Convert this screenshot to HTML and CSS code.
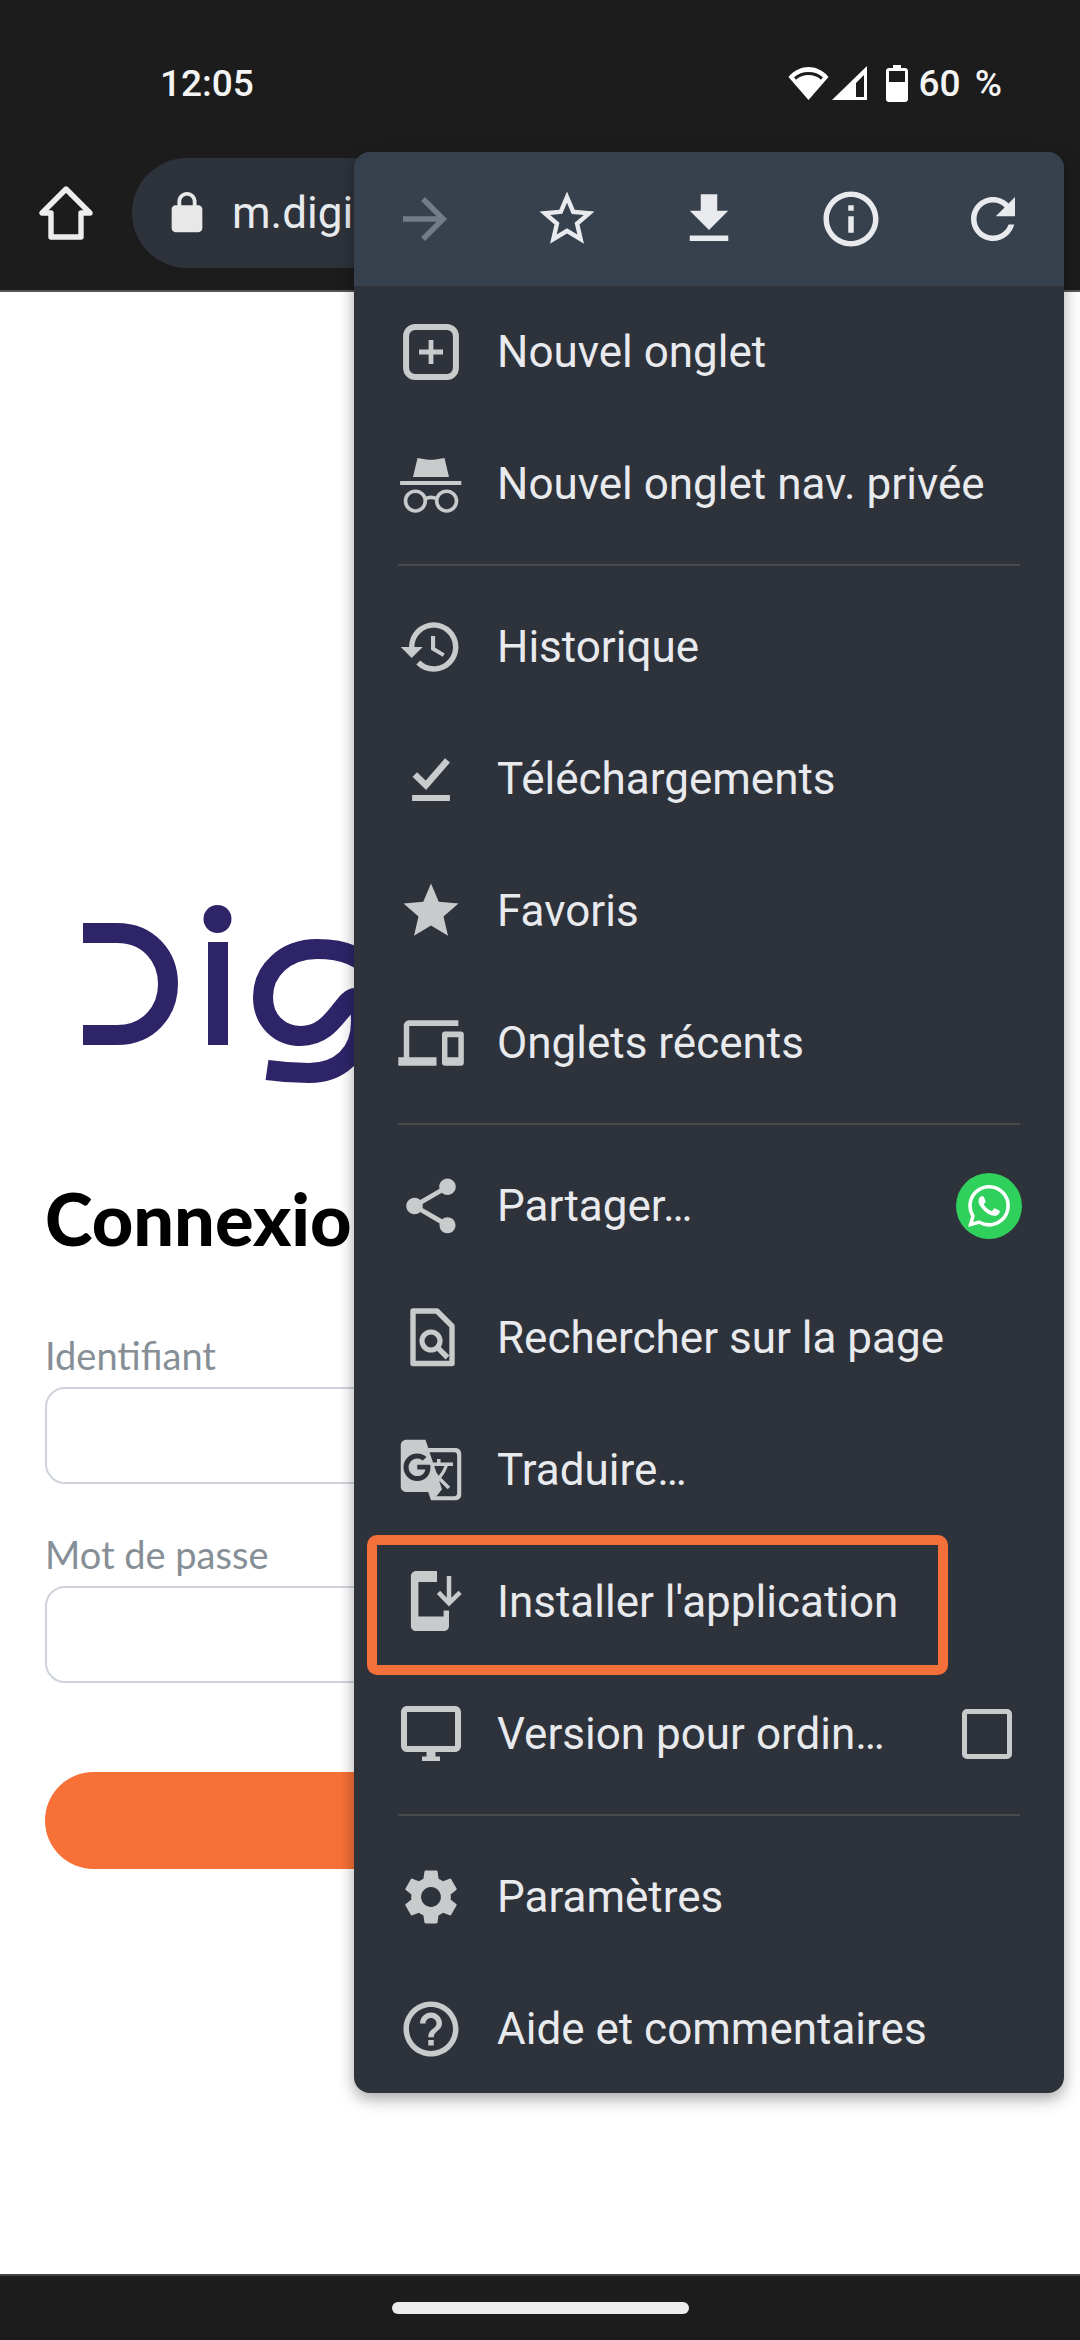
FILE: index.html
```html
<!DOCTYPE html>
<html lang="fr">
<head>
    <meta charset="UTF-8">
    <meta name="viewport" content="width=device-width, initial-scale=1.0">
    <title>Connexion</title>
    <link rel="stylesheet" href="styles.css">
</head>
<body>
    <div class="screen">
        <!-- barre d'etat -->
        <div class="status">
            <span class="time">12:05</span>
            <div class="status-right">
                <svg class="wifi" viewBox="0 0 41 34"><path d="M.5 11C6 4 14 1 20.5 1S35 4 40.5 11L20.5 34z" fill="#fff"/><path d="M7 12.5C11 9 16 7.5 20.5 7.5S30 9 34 12.5" fill="none" stroke="#1c1c1c" stroke-width="3"/></svg>
                <svg class="signal" viewBox="0 0 35 34"><path d="M35 0v34H0z" fill="#fff"/><path d="M32 9v22h-8V17z" fill="#1c1c1c"/></svg>
                <svg class="battery" viewBox="0 0 22 37"><path d="M7 0h8v3h4c1.7 0 3 1.300 3 3v28c0 1.700-1.300 3-3 3H3c-1.700 0-3-1.300-3-3V6c0-1.700 1.300-3 3-3h4z" fill="#fff"/><rect x="3" y="6" width="16" height="11" fill="#1c1c1c"/></svg>
                <span class="percent">60 %</span>
            </div>
        </div>

        <!-- barre d'adresse -->
        <div class="toolbar">
            <svg class="icon home" viewBox="0 0 24 24"><path d="M12 4L4 12h3v8h10v-8h3z" fill="none" stroke="#eceded" stroke-width="1.800" stroke-linejoin="round"/></svg>
            <div class="url">
                <svg class="lock" viewBox="0 0 24 24"><path d="M18 8h-1V6c0-2.760-2.240-5-5-5S7 3.240 7 6v2H6c-1.100 0-2 .9-2 2v10c0 1.100.9 2 2 2h12c1.100 0 2-.9 2-2V10c0-1.100-.9-2-2-2zM9 6c0-1.660 1.340-3 3-3s3 1.340 3 3v2H9V6z"/></svg>
                <span>m.digiposte.fr</span>
            </div>
        </div>

        <!-- page du site -->
        <div class="content">
            <svg class="logo" viewBox="83 905 300 180">
                <g fill="none" stroke="#2e2569" stroke-width="20">
                    <path d="M83 933h34c32 0 51 24 51 51s-19 51-51 51H83"/>
                    <path d="M218 942v103"/>
                    <path d="M375 975c-12-20-35-26-58-26-32 0-54 22-54 48 0 24 17 39 38 39 22 0 32-16 42-28 4-5 8-10 12-10 5 2 6 14 6 24 0 32-22 51-52 51-14 0-28-1-42-3"/>
                </g>
                <circle cx="217.500" cy="919" r="14" fill="#2e2569"/>
            </svg>
            <h1>Connexion</h1>
            <label>Identifiant</label>
            <div class="field"></div>
            <label class="second">Mot de passe</label>
            <div class="field"></div>
            <div class="submit"></div>
        </div>

        <div class="navbar"><span class="handle"></span></div>

        <!-- menu -->
        <div class="menu">
            <div class="menu-top">
                <svg class="icon small off" viewBox="0 0 24 24"><path d="M12 4l-1.410 1.410L16.170 11H4v2h12.170l-5.580 5.590L12 20l8-8z"/></svg>
                <svg class="icon small" viewBox="0 0 24 24"><path d="M22 9.240l-7.190-.62L12 2 9.190 8.630 2 9.240l5.460 4.730L5.820 21 12 17.270 18.180 21l-1.630-7.030L22 9.240zM12 15.400l-3.760 2.270 1-4.280-3.320-2.880 4.380-.38L12 6.100l1.710 4.040 4.380.38-3.320 2.880 1 4.280L12 15.400z"/></svg>
                <svg class="icon small" viewBox="0 0 24 24"><path d="M19 9h-4V3H9v6H5l7 7 7-7zM5 18v2h14v-2H5z"/></svg>
                <svg class="icon small" viewBox="0 0 24 24"><path d="M11 7h2v2h-2zm0 4h2v6h-2zm1-9C6.480 2 2 6.480 2 12s4.480 10 10 10 10-4.480 10-10S17.520 2 12 2zm0 18c-4.410 0-8-3.590-8-8s3.590-8 8-8 8 3.590 8 8-3.590 8-8 8z"/></svg>
                <svg class="icon small" viewBox="0 0 24 24"><path d="M17.650 6.350C16.200 4.900 14.210 4 12 4c-4.420 0-7.990 3.580-7.990 8s3.570 8 7.990 8c3.730 0 6.840-2.550 7.730-6h-2.080c-.82 2.330-3.040 4-5.650 4-3.310 0-6-2.690-6-6s2.690-6 6-6c1.660 0 3.140.69 4.220 1.780L13 11h7V4l-2.350 2.350z"/></svg>
            </div>

            <div class="row">
                <svg class="icon" viewBox="0 0 24 24"><rect x="3.700" y="3.700" width="16.600" height="16.600" rx="3" fill="none" stroke="#c9cacc" stroke-width="2"/><path d="M11.200 8h1.600v3.200H16v1.600h-3.200V16h-1.600v-3.200H8v-1.600h3.200z"/></svg>
                <span>Nouvel onglet</span>
            </div>
            <div class="row">
                <svg class="icon" viewBox="0 0 24 24"><path d="M7.500 3.300l3 .5c1 .2 2 .2 3 0l3-.5L18 9.700H6zM1.700 11h20.400v1.300H1.700z"/><g fill="none" stroke="#c9cacc" stroke-width="1.200"><circle cx="6.800" cy="17.700" r="3.300"/><circle cx="17.200" cy="17.700" r="3.300"/><path d="M10 17c1.300-.7 2.700-.7 4 0"/></g></svg>
                <span>Nouvel onglet nav. privée</span>
            </div>
            <div class="divider"></div>
            <div class="row">
                <svg class="icon small" viewBox="0 0 24 24"><path d="M13 3a9 9 0 0 0-9 9H1l3.890 3.890.07.14L9 12H6c0-3.870 3.130-7 7-7s7 3.130 7 7-3.130 7-7 7c-1.930 0-3.680-.79-4.940-2.060l-1.420 1.420A8.954 8.954 0 0 0 13 21a9 9 0 0 0 0-18zm-1 5v5l4.280 2.540.72-1.210-3.500-2.080V8H12z"/></svg>
                <span>Historique</span>
            </div>
            <div class="row">
                <svg class="icon" viewBox="0 0 24 24"><path d="M5.700 17.300h12.600v2H5.700z"/><path d="M6.600 10.500l3.700 3.600 7.200-8.300" fill="none" stroke="#c9cacc" stroke-width="2.200"/></svg>
                <span>Téléchargements</span>
            </div>
            <div class="row">
                <svg class="icon small" viewBox="0 0 24 24"><path d="M12 17.270L18.180 21l-1.640-7.030L22 9.240l-7.190-.61L12 2 9.190 8.630 2 9.240l5.460 4.730L5.820 21z"/></svg>
                <span>Favoris</span>
            </div>
            <div class="row">
                <svg class="icon" viewBox="0 0 24 24"><path transform="translate(1.100 .6) scale(.91 .95)" d="M4 6h18V4H4c-1.100 0-2 .9-2 2v11H0v3h14v-3H4V6zm19 2h-6c-.55 0-1 .45-1 1v10c0 .55.45 1 1 1h6c.55 0 1-.45 1-1V9c0-.55-.45-1-1-1zm-1 9h-4v-7h4v7z"/></svg>
                <span>Onglets récents</span>
            </div>
            <div class="divider"></div>
            <div class="row">
                <svg class="icon small" viewBox="0 0 24 24"><path d="M18 16.080c-.76 0-1.440.3-1.960.77L8.910 12.700c.05-.23.09-.46.09-.7s-.04-.47-.09-.7l7.050-4.110c.54.5 1.250.81 2.040.81 1.660 0 3-1.340 3-3s-1.340-3-3-3-3 1.340-3 3c0 .24.04.47.09.7L8.040 9.810C7.500 9.310 6.790 9 6 9c-1.660 0-3 1.340-3 3s1.340 3 3 3c.79 0 1.500-.31 2.040-.81l7.120 4.160c-.05.21-.08.43-.08.65 0 1.610 1.310 2.920 2.920 2.920s2.920-1.310 2.920-2.920-1.310-2.920-2.920-2.920z"/></svg>
                <span>Partager…</span>
                <span class="whatsapp"><svg viewBox="0 0 24 24"><path d="M17.472 14.382c-.297-.149-1.758-.867-2.030-.967-.273-.099-.471-.148-.67.15-.197.297-.767.966-.94 1.164-.173.199-.347.223-.644.075-.297-.15-1.255-.463-2.390-1.475-.883-.788-1.480-1.761-1.653-2.059-.173-.297-.018-.458.13-.606.134-.133.298-.347.446-.52.149-.174.198-.298.298-.497.099-.198.05-.371-.025-.52-.075-.149-.669-1.612-.916-2.207-.242-.579-.487-.5-.669-.51-.173-.008-.371-.01-.57-.01-.198 0-.52.074-.792.372-.272.297-1.040 1.016-1.040 2.479 0 1.462 1.065 2.875 1.213 3.074.149.198 2.096 3.200 5.077 4.487.709.306 1.262.489 1.694.625.712.227 1.360.195 1.871.118.571-.085 1.758-.719 2.006-1.413.248-.694.248-1.289.173-1.413-.074-.124-.272-.198-.57-.347m-5.421 7.403h-.004a9.870 9.870 0 0 1-5.031-1.378l-.361-.214-3.741.982.998-3.648-.235-.374a9.860 9.860 0 0 1-1.510-5.260c.001-5.450 4.436-9.884 9.888-9.884 2.640 0 5.122 1.030 6.988 2.898a9.825 9.825 0 0 1 2.893 6.994c-.003 5.450-4.437 9.884-9.885 9.884m8.413-18.297A11.815 11.815 0 0 0 12.050 0C5.495 0 .16 5.335.157 11.892c0 2.096.547 4.142 1.588 5.945L.057 24l6.305-1.654a11.882 11.882 0 0 0 5.683 1.448h.005c6.554 0 11.890-5.335 11.893-11.893a11.821 11.821 0 0 0-3.480-8.413z"/></svg></span>
            </div>
            <div class="row">
                <svg class="icon" viewBox="0 0 24 24"><path d="M6 3h8l5 5v12.500H6z" fill="none" stroke="#c9cacc" stroke-width="1.800" stroke-linejoin="round"/><circle cx="12" cy="13" r="3" fill="none" stroke="#c9cacc" stroke-width="1.700"/><path d="M14.200 15.200l3.300 3.300" stroke="#c9cacc" stroke-width="1.800"/></svg>
                <span>Rechercher sur la page</span>
            </div>
            <div class="row">
                <svg class="icon small" viewBox="0 0 24 24"><path d="M21 4H11l-1-3H3c-1.100 0-2 .9-2 2v15c0 1.100.9 2 2 2h8l1 3h9c1.100 0 2-.9 2-2V6c0-1.100-.9-2-2-2zM7 16c-2.760 0-5-2.240-5-5s2.240-5 5-5c1.350 0 2.480.5 3.350 1.300L9.030 8.570c-.38-.36-1.040-.78-2.030-.78-1.740 0-3.150 1.440-3.150 3.210S5.260 14.210 7 14.210c2.010 0 2.840-1.440 2.920-2.410H7v-1.710h4.680c.07.31.12.61.12 1.020C11.800 13.970 9.890 16 7 16zm6.170-5.420h3.700c-.43 1.250-1.110 2.430-2.050 3.470-.31-.35-.6-.72-.86-1.100l-.79-2.370zm8.330 9.920c0 .55-.45 1-1 1H14l2-2.500-1.040-3.100 3.100 3.100.92-.92-3.300-3.250.02-.02c1.130-1.250 1.930-2.690 2.400-4.220H20v-1.300h-4.530V8h-1.290v1.290h-1.440L11.460 5.500h9.040c.55 0 1 .45 1 1v14z"/></svg>
                <span>Traduire…</span>
            </div>
            <div class="row install">
                <svg class="icon" viewBox="0 0 24 24"><path d="M7 1.700h7v3.600H7.800v11.500h8.400v-2H18V20c0 1-.8 1.700-1.700 1.700H7c-.9 0-1.700-.8-1.700-1.700V3.400c0-.9.8-1.700 1.700-1.700z"/><path d="M18 3.300v9M14.500 8.800l3.500 3.600 3.700-3.600" fill="none" stroke="#c9cacc" stroke-width="1.500"/></svg>
                <span>Installer l'application</span>
                <div class="highlight"></div>
            </div>
            <div class="row">
                <svg class="icon" viewBox="0 0 24 24"><path fill-rule="evenodd" d="M4 2.700h16c1.100 0 2 .9 2 2V16c0 1.100-.9 2-2 2h-6.500v1.500H15V21H9v-1.500h1.500V18H4c-1.100 0-2-.9-2-2V4.700c0-1.100.9-2 2-2zm0 2V16h16V4.700H4z"/></svg>
                <span>Version pour ordin…</span>
                <span class="check"></span>
            </div>
            <div class="divider"></div>
            <div class="row">
                <svg class="icon small" viewBox="0 0 24 24"><path d="M19.140 12.940c.04-.3.06-.61.06-.94 0-.32-.02-.64-.07-.94l2.030-1.580c.18-.14.23-.41.12-.61l-1.920-3.320c-.12-.22-.37-.29-.59-.22l-2.390.96c-.5-.38-1.030-.7-1.620-.94l-.36-2.540c-.04-.24-.24-.41-.48-.41h-3.840c-.24 0-.43.17-.47.41l-.36 2.540c-.59.24-1.130.57-1.620.94l-2.390-.96c-.22-.08-.47 0-.59.22L2.740 8.870c-.12.21-.08.47.12.61l2.030 1.580c-.05.3-.09.63-.09.94s.02.64.07.94l-2.030 1.580c-.18.14-.23.41-.12.61l1.920 3.320c.12.22.37.29.59.22l2.390-.96c.5.38 1.030.7 1.620.94l.36 2.540c.05.24.24.41.48.41h3.840c.24 0 .44-.17.47-.41l.36-2.540c.59-.24 1.130-.56 1.620-.94l2.390.96c.22.08.47 0 .59-.22l1.920-3.320c.12-.22.07-.47-.12-.61l-2.010-1.580zM12 15.600c-1.980 0-3.600-1.620-3.600-3.600s1.620-3.600 3.600-3.600 3.600 1.620 3.600 3.600-1.620 3.600-3.600 3.600z"/></svg>
                <span>Paramètres</span>
            </div>
            <div class="row">
                <svg class="icon small" viewBox="0 0 24 24"><path d="M11 18h2v-2h-2v2zm1-16C6.480 2 2 6.480 2 12s4.480 10 10 10 10-4.480 10-10S17.520 2 12 2zm0 18c-4.410 0-8-3.590-8-8s3.590-8 8-8 8 3.590 8 8-3.590 8-8 8zm0-14c-2.210 0-4 1.790-4 4h2c0-1.100.9-2 2-2s2 .9 2 2c0 2-3 1.750-3 5h2c0-2.250 3-2.500 3-5 0-2.210-1.790-4-4-4z"/></svg>
                <span>Aide et commentaires</span>
            </div>
        </div>
    </div>
</body>
</html>
```

FILE: styles.css
```css
/* reset */
body {
    margin: 0;
    background: #fff;
    font-family: Roboto, "Liberation Sans", sans-serif;
}
h1 {
    margin: 0;
}

.screen {
    position: relative;
    display: flex;
    flex-direction: column;
    width: 1080px;
    height: 2340px;
    overflow: hidden;
}

/* status bar */
.status {
    display: flex;
    justify-content: space-between;
    align-items: center;
    height: 166px;
    padding: 0 78px 0 160px;
    margin-bottom: -8px;
    box-sizing: border-box;
    background: #1c1c1c;
    color: #f4f4f4;
    font-size: 37px;
    font-weight: 500;
}
.status-right {
    display: flex;
    align-items: center;
}
.wifi {
    width: 41px;
    height: 34px;
}
.signal {
    width: 35px;
    height: 34px;
    margin-left: 3px;
}
.battery {
    width: 22px;
    height: 37px;
    margin-left: 19px;
}
.percent {
    margin-left: 11px;
    word-spacing: 5px;
}

/* address bar */
.toolbar {
    display: flex;
    align-items: flex-start;
    height: 132px;
    padding-left: 30px;
    background: #1c1c1c;
    border-bottom: 2px solid #555;
}
.icon {
    flex: none;
    width: 72px;
    height: 72px;
    fill: #c9cacc;
}
.icon.small {
    width: 66px;
    height: 66px;
    margin: 3px;
}
.home {
    margin-top: 19px;
}
.url {
    display: flex;
    align-items: center;
    width: 500px;
    height: 110px;
    margin-left: 30px;
    padding-left: 32px;
    border-radius: 55px;
    background: #2d323b;
    color: #e8eaed;
    font-size: 44px;
}
.lock {
    width: 46px;
    height: 46px;
    margin-right: 22px;
    fill: #e8e8e8;
}

/* login page */
.content {
    flex: 1;
    padding-left: 45px;
    color: #000;
    font-family: Lato, sans-serif;
}
.logo {
    display: block;
    width: 300px;
    height: 180px;
    margin: 613px 0 0 38px;
}
.content h1 {
    margin-top: 90px;
    font-size: 72px;
    line-height: 86px;
    font-weight: 900;
}
.content label {
    display: block;
    margin-top: 71px;
    margin-bottom: 9px;
    color: #868e96;
    font-size: 38px;
    line-height: 46px;
}
.content .second {
    margin-top: 47px;
}
.field {
    width: 990px;
    height: 97px;
    box-sizing: border-box;
    border: 2px solid #ced4da;
    border-radius: 20px;
}
.submit {
    width: 990px;
    height: 97px;
    margin-top: 89px;
    border-radius: 49px;
    background: #f77037;
}

/* navigation bar */
.navbar {
    display: flex;
    justify-content: center;
    align-items: center;
    height: 64px;
    background: #1c1c1c;
    border-top: 2px solid #444;
}
.handle {
    width: 297px;
    height: 12px;
    border-radius: 6px;
    background: #ececec;
}

/* menu */
.menu {
    position: absolute;
    top: 152px;
    left: 354px;
    width: 710px;
    height: 1941px;
    border-radius: 16px;
    background: #2d323b;
    color: #e8eaed;
    font-size: 44px;
    box-shadow: 0 6px 16px rgba(0, 0, 0, .35);
}
.menu-top {
    display: flex;
    justify-content: space-around;
    align-items: center;
    height: 134px;
    border-radius: 16px 16px 0 0;
    background: #37404d;
}
.menu-top .icon {
    fill: #e8eaed;
}
.menu-top .off {
    fill: #747c88;
}
.row {
    position: relative;
    display: flex;
    align-items: center;
    gap: 30px;
    height: 132px;
    padding-left: 41px;
}
.divider {
    height: 2px;
    margin: 14px 44px 15px 44px;
    background: #48494b;
}
.whatsapp {
    display: flex;
    justify-content: center;
    align-items: center;
    width: 66px;
    height: 66px;
    margin-left: auto;
    margin-right: 42px;
    border-radius: 50%;
    background: #2fd05c;
}
.whatsapp svg {
    width: 42px;
    height: 42px;
    fill: #fff;
}
.check {
    width: 50px;
    height: 50px;
    margin-left: auto;
    margin-right: 52px;
    box-sizing: border-box;
    border: 5px solid #c9cacc;
    border-radius: 5px;
}
.highlight {
    position: absolute;
    top: -1px;
    left: 13px;
    width: 581px;
    height: 140px;
    box-sizing: border-box;
    border: 10px solid #f4703a;
    border-radius: 10px;
}
```
